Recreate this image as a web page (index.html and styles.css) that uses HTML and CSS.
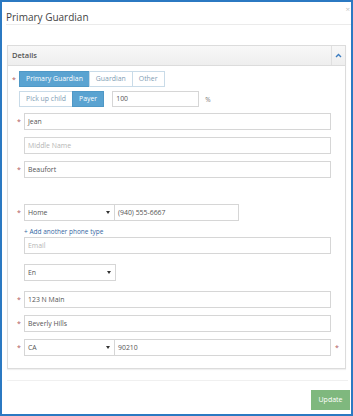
FILE: index.html
```html
<!DOCTYPE html>
<html>
<head>
    <title>Primary Guardian</title>
    <link rel="stylesheet" href="styles.css">
</head>
<body>
    <div class="modal">
        <div class="modal-header">
            <h4 class="modal-title">Primary Guardian</h4>
            <span class="close">&times;</span>
        </div>

        <div class="panel">
            <div class="panel-heading">
                <span class="panel-title">Details</span>
                <span class="panel-toggle">
                    <svg width="7" height="5" viewBox="0 0 7 5"><polyline points="1,4 3.5,1.5 6,4" fill="none" stroke="#3b7cc0" stroke-width="1.4"/></svg>
                </span>
            </div>
            <div class="panel-body">
                <div class="row row-type">
                    <span class="req">*</span>
                    <div class="btn-group">
                        <span class="btn active">Primary Guardian</span>
                        <span class="btn">Guardian</span>
                        <span class="btn">Other</span>
                    </div>
                </div>
                <div class="row row-role">
                    <div class="btn-group">
                        <span class="btn">Pick up child</span>
                        <span class="btn active">Payer</span>
                    </div>
                    <div class="input input-pct">100</div>
                    <span class="pct">%</span>
                </div>

                <div class="field field-first">
                    <span class="req">*</span>
                    <div class="input wide">Jean</div>
                </div>
                <div class="field">
                    <span class="req"></span>
                    <div class="input wide placeholder">Middle Name</div>
                </div>
                <div class="field">
                    <span class="req">*</span>
                    <div class="input wide">Beaufort</div>
                </div>

                <div class="field field-phone">
                    <span class="req">*</span>
                    <div class="select">Home<span class="caret"></span></div>
                    <div class="input phone">(940) 555-6667</div>
                </div>
                <div class="add-link">+ Add another phone type</div>
                <div class="field field-email">
                    <span class="req"></span>
                    <div class="input wide placeholder">Email</div>
                </div>
                <div class="field field-gap">
                    <span class="req"></span>
                    <div class="select select-lang">En<span class="caret"></span></div>
                </div>

                <div class="field field-gap">
                    <span class="req">*</span>
                    <div class="input wide">123 N Main</div>
                </div>
                <div class="field">
                    <span class="req">*</span>
                    <div class="input wide">Beverly Hills</div>
                </div>
                <div class="field">
                    <span class="req">*</span>
                    <div class="select">CA<span class="caret"></span></div>
                    <div class="input zip">90210</div>
                    <span class="req req-after">*</span>
                </div>
            </div>
        </div>

        <div class="modal-footer">
            <span class="btn-update">Update</span>
        </div>
    </div>
</body>
</html>
```

FILE: styles.css
```css
body {
    margin: 0;
    font-family: "Open Sans", "Liberation Sans", sans-serif;
    background-color: #fff;
}
.modal {
    width: 353px;
    height: 416px;
    box-sizing: border-box;
    border: 2px solid #2b79c2;
    background-color: #fff;
}
.modal-header {
    display: flex;
    justify-content: space-between;
    height: 22px;
    margin-left: 4px;
    border-bottom: 1px solid #ebebeb;
}
.modal-title {
    margin: 0;
    padding-top: 9px;
    font-size: 10px;
    line-height: 12px;
    font-weight: normal;
    color: #444;
}
.close {
    font-size: 8px;
    line-height: 8px;
    padding-top: 3px;
    margin-right: 1px;
    color: #c4c4c4;
}
.panel {
    margin: 20px 5px 0 5px;
    border: 1px solid #dcdcdc;
    box-shadow: 0 1px 1px rgba(0, 0, 0, 0.06);
}
.panel-heading {
    display: flex;
    justify-content: space-between;
    height: 19px;
    background: linear-gradient(#f8f8f8, #eeeeee);
    border-bottom: 1px solid #dcdcdc;
}
.panel-title {
    padding-left: 4px;
    font-size: 7.5px;
    line-height: 19px;
    font-weight: 600;
    color: #555;
}
.panel-toggle {
    display: flex;
    align-items: center;
    justify-content: center;
    width: 13px;
    border-left: 1px solid #e0e0e0;
}
.panel-body {
    padding: 5px 0 12px 0;
}
.row {
    display: flex;
    align-items: center;
    height: 16px;
}
.row-type {
    margin-left: 4px;
}
.row-role {
    margin-top: 4px;
    margin-left: 11px;
}
.req {
    width: 7px;
    flex-shrink: 0;
    font-size: 7px;
    line-height: 17px;
    color: #b0585a;
}
.req-after {
    margin-left: 4px;
}
.btn-group {
    display: flex;
    height: 16px;
}
.btn {
    padding: 0 6px;
    font-size: 6.9px;
    line-height: 14px;
    color: #7f9db4;
    background-color: #fff;
    border: 1px solid #c9dbe8;
    margin-left: -1px;
}
.btn:first-child {
    margin-left: 0;
}
.btn.active {
    color: #fff;
    background-color: #5aa3d1;
    border-color: #4f98c6;
}
.input, .select {
    box-sizing: border-box;
    height: 17px;
    padding-left: 3px;
    border: 1px solid #d6d6d6;
    font-size: 6.9px;
    line-height: 15px;
    color: #555;
    background-color: #fff;
}
.input-pct {
    width: 87px;
    height: 16px;
    line-height: 14px;
    margin-left: 8px;
}
.pct {
    margin-left: 6px;
    font-size: 6.5px;
    color: #777;
}
.field {
    display: flex;
    margin-left: 9px;
    margin-top: 7px;
}
.field-first {
    margin-top: 6px;
}
.field-phone {
    margin-top: 26px;
}
.field-email {
    margin-top: 0;
}
.field-gap {
    margin-top: 10px;
}
.wide {
    width: 307px;
}
.placeholder {
    color: #b5b5b5;
}
.select {
    display: flex;
    justify-content: space-between;
    align-items: center;
    width: 91px;
    padding-right: 4px;
}
.select-lang {
    width: 92px;
}
.caret {
    width: 0;
    height: 0;
    border-left: 2px solid transparent;
    border-right: 2px solid transparent;
    border-top: 3px solid #333;
}
.phone {
    width: 125px;
    margin-left: -1px;
}
.zip {
    width: 217px;
    margin-left: -1px;
}
.add-link {
    margin: 5px 0 0 16px;
    font-size: 6.5px;
    line-height: 11px;
    color: #3569a3;
}
.modal-footer {
    display: flex;
    justify-content: flex-end;
    margin: 11px 3px 0 5px;
    padding-top: 9px;
    border-top: 1px solid #f0f0f0;
}
.btn-update {
    width: 39px;
    height: 20px;
    margin-right: -2px;
    text-align: center;
    font-size: 7px;
    line-height: 20px;
    color: #fff;
    background-color: #7fb87e;
}
```
